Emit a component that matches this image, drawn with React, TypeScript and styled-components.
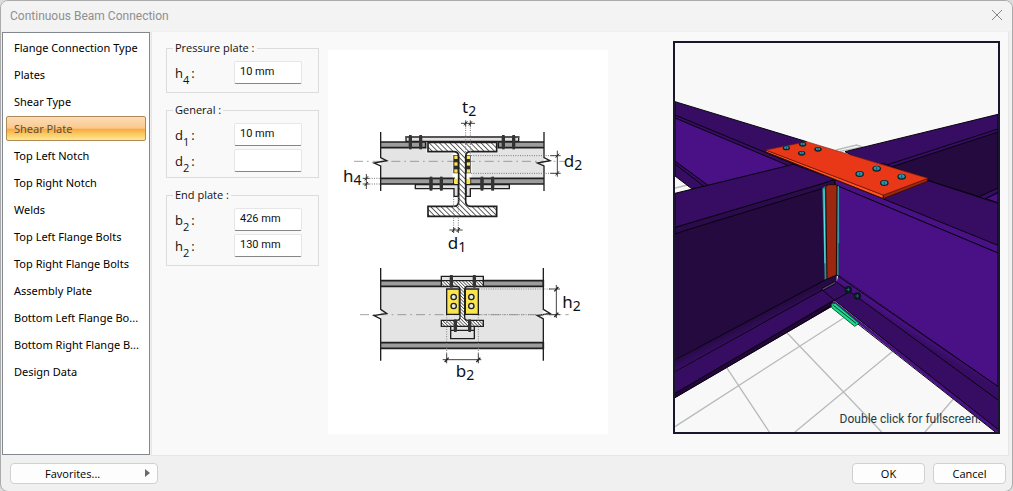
import React from 'react';
import styled, { createGlobalStyle } from 'styled-components';

const GlobalStyle = createGlobalStyle`
  *, *::before, *::after { box-sizing: border-box; }
  body {
    margin: 0;
    background: #dcdcdc;
    color: #111;
    font-family: 'Open Sans', 'Noto Sans', sans-serif;
    font-size: 11px;
  }
  button, input { font: inherit; color: inherit; }
`;

const Dialog = styled.main`
  display: flex;
  flex-direction: column;
  min-height: 100vh;
  border: 1px solid #ababab;
  border-radius: 8px;
  background: #f0f0f0;
  overflow: hidden;
`;

const TitleBar = styled.header`
  display: flex;
  align-items: center;
  justify-content: space-between;
  height: 30px;
  padding: 0 9px;
  background: #f3f3f3;
`;

const Title = styled.h1`
  margin: 0;
  font-family: Roboto, sans-serif;
  font-size: 12px;
  font-weight: 400;
  color: #8f8f8f;
`;

const CloseButton = styled.button`
  display: flex;
  padding: 0 0 2px;
  border: 0;
  background: none;
  color: #858585;
`;

const Body = styled.div`
  display: flex;
  flex: 1;
  gap: 1px;
  padding: 0 3px 0 1px;
`;

const Nav = styled.nav`
  flex: none;
  width: 148px;
  margin: 1px 0;
  padding: 2px 3px;
  border: 1px solid #828790;
  background: #fff;
  font-family: 'Noto Sans', sans-serif;
`;

const NavList = styled.ul`
  display: flex;
  flex-direction: column;
  gap: 2px;
  margin: 0;
  padding: 0;
  list-style: none;
`;

const NavItem = styled.button<{ $active?: boolean }>`
  display: block;
  width: 100%;
  height: 25px;
  padding: 0 7px;
  border: 1px solid ${p => (p.$active ? '#b08a55' : 'transparent')};
  border-radius: 2px;
  background: ${p =>
    p.$active
      ? 'linear-gradient(#fbdcb8 0%, #fbc98f 48%, #f8ab42 54%, #fbcb62 75%, #fde79a 100%)'
      : 'none'};
  color: ${p => (p.$active ? '#5c5040' : '#000')};
  text-align: left;
  white-space: nowrap;
`;

const Content = styled.section`
  display: flex;
  flex: 1;
  align-items: flex-start;
  padding: 9px 8px 21px 14px;
  border: 1px solid #e6e6e6;
  border-top-color: #efefef;
  background: #f9f9f9;
`;

const Fields = styled.form`
  display: flex;
  flex-direction: column;
  gap: 10px;
  width: 153px;
`;

const Group = styled.fieldset<{ $bottom: number }>`
  min-width: 0;
  margin: 0;
  padding: 6px 16px ${p => p.$bottom}px 8px;
  border: 1px solid #dcdcdc;

  & > div + div { margin-top: 3px; }
`;

const Legend = styled.legend`
  margin-left: -2px;
  padding: 0 2px;
  line-height: 14px;
`;

const Row = styled.div`
  display: flex;
  align-items: center;
  justify-content: space-between;
`;

const Label = styled.label`
  display: flex;
  font-size: 13px;
  line-height: 18px;

  sub {
    align-self: flex-end;
    margin: 0 2px -5px 0;
    font-size: 11px;
    line-height: 14px;
    vertical-align: baseline;
  }
`;

const Field = styled.input`
  width: 68px;
  height: 23px;
  padding: 0 5px 2px;
  border: 1px solid #e6e6e6;
  border-bottom-color: #868686;
  border-radius: 2px;
  outline: 0;
  background: #fff;
  font-family: Roboto, sans-serif;
`;

const Diagram = styled.figure`
  margin: 9px 10px 0 9px;
  background: #fff;

  svg { display: block; }
`;

const Preview = styled.figure`
  position: relative;
  margin: 0 0 0 auto;
  border: 2px solid #17182e;
  background: #f8f8f8;

  svg { display: block; }
`;

const Hint = styled.figcaption`
  position: absolute;
  right: 17px;
  bottom: 5px;
  color: #263a40;
  font-family: Roboto, sans-serif;
  font-size: 12px;
  line-height: 16px;
`;

const Footer = styled.footer`
  display: flex;
  align-items: center;
  gap: 8px;
  height: 35px;
  padding: 0 6px 1px 9px;
`;

const PushButton = styled.button<{ $wide?: boolean }>`
  display: flex;
  align-items: center;
  justify-content: ${p => (p.$wide ? 'space-between' : 'center')};
  width: ${p => (p.$wide ? 148 : 73)}px;
  height: 21px;
  padding: ${p => (p.$wide ? '0 6px 0 34px' : '0')};
  border: 1px solid #d0d0d0;
  border-radius: 4px;
  background: #fdfdfd;
  color: #000;
`;

const Spacer = styled.div`
  flex: 1;
`;

const sections = [
  'Flange Connection Type',
  'Plates',
  'Shear Type',
  'Shear Plate',
  'Top Left Notch',
  'Top Right Notch',
  'Welds',
  'Top Left Flange Bolts',
  'Top Right Flange Bolts',
  'Assembly Plate',
  'Bottom Left Flange Bo...',
  'Bottom Right Flange B...',
  'Design Data',
];

const groups = [
  { title: 'Pressure plate :', bottom: 8, fields: [['h', '4', '10 mm']] },
  { title: 'General :', bottom: 5, fields: [['d', '1', '10 mm'], ['d', '2', '']] },
  { title: 'End plate :', bottom: 8, fields: [['b', '2', '426 mm'], ['h', '2', '130 mm']] },
];

const INK = '#1f1f1f';

function Bolts({ xs, y1, y2 }: { xs: number[]; y1: number; y2: number }) {
  return (
    <g fill="#333">
      {xs.map(x => (
        <g key={x}>
          <rect x={x - 4} y={y1} width={8} height={y2 - y1} />
          <rect x={x - 5} y={y1 + 4} width={10} height={y2 - y1 - 8} />
        </g>
      ))}
    </g>
  );
}

function Symbol({ x, y, name, index }: { x: number; y: number; name: string; index: string }) {
  return (
    <text x={x} y={y} fontSize={51} fontFamily="'Noto Sans', sans-serif" fill="#111">
      {name}
      <tspan fontSize={42} dy={9}>{index}</tspan>
    </text>
  );
}

/* One drawing unit is a third of a screen pixel. */
function SectionDrawing() {
  return (
    <svg width="280" height="384" viewBox="-96 -120 840 1152" role="img" aria-label="Connection section">
      <defs>
        <pattern id="hatch" width="11" height="11" patternUnits="userSpaceOnUse" patternTransform="rotate(-45)">
          <rect width="11" height="11" fill="#fff" />
          <path d="M1 0V11" stroke="#444" strokeWidth="3" />
        </pattern>
        <pattern id="hatchFine" width="7" height="7" patternUnits="userSpaceOnUse" patternTransform="rotate(-45)">
          <rect width="7" height="7" fill="#fff" />
          <path d="M1 0V7" stroke="#555" strokeWidth="3" />
        </pattern>
      </defs>

      <g>
        <path d="M62 173H552V265H62Z" fill="#e4e4e4" />
        <path d="M199 155H414V190H335V265H331V284H282V265H278V190H199Z" fill="#fff" />
        <path d="M-18 214H616" stroke="#777" strokeWidth="2" strokeDasharray="27 12 5 12" />
        <g fill="#9c9c9c" stroke={INK} strokeWidth="5">
          <path d="M62 156H197V173H62M552 156H415V173H552" />
          <path d="M62 265H282V282H62M552 265H331V282H552" />
        </g>
        <path d="M138 141H476V154H138Z" fill="#e4e0e0" stroke={INK} strokeWidth="4" />
        <path d="M136 141H478" stroke="#555" strokeWidth="6" />
        <path
          d="M166 284H295V319H282V296H166ZM448 284H318V319H331V296H448Z"
          fill="#e0dede"
          stroke={INK}
          strokeWidth="4"
        />
        <Bolts xs={[151, 182, 430, 461]} y1={135} y2={178} />
        <Bolts xs={[213, 244, 366, 398]} y1={260} y2={302} />
        <path d="M280 195H296V250H280ZM317 195H332V250H317Z" fill="#2c2c2c" />
        <g fill="#fbe54e">
          {[197, 217, 238].map(y => (
            <g key={y}>
              <rect x="283" y={y} width="10" height="10" />
              <rect x="320" y={y} width="10" height="10" />
            </g>
          ))}
          <rect x="282" y="266" width="13" height="15" />
          <rect x="318" y="266" width="13" height="15" />
        </g>
        <path
          d="M204 157H410V185H332Q317 185 317 200V334Q317 349 332 349H410V379H204V349H281Q296 349 296 334V200Q296 185 281 185H204Z"
          fill="url(#hatch)"
          stroke={INK}
          strokeWidth="5"
        />
        <g fill="none" stroke={INK} strokeWidth="4">
          <path d="M62 126V203L80 212L42 219L62 228V303" />
          <path d="M552 126V203L570 212L532 219L552 228V303" />
        </g>
        <g fill="none" stroke="#777" strokeWidth="3" strokeDasharray="3 4">
          <path d="M317 106V195M331 106V195M333 197H590M333 250H590M28 265H62M28 282H62M281 320V412M295 320V412" />
        </g>
        <g fill="none" stroke="#444" strokeWidth="3">
          <path d="M303 100H345M592 182V260M19 252V297M268 420H308" />
          <path d="M317 91V110M331 91V110M571 197H602M571 250H602M8 265H28M8 282H28M281 411V429M295 411V429" />
        </g>
        <g stroke={INK} strokeWidth="3">
          <path d="M312 106L322 94M326 106L336 94M587 203L597 191M587 256L597 244M14 271L24 259M14 288L24 276M276 426L286 414M290 426L300 414" />
        </g>
        <Symbol x={306} y={68} name="t" index="2" />
        <Symbol x={611} y={232} name="d" index="2" />
        <Symbol x={-51} y={276} name="h" index="4" />
        <Symbol x={263} y={477} name="d" index="1" />
      </g>

      <g transform="translate(0 495)">
        <path d="M62 94H550V262H62Z" fill="#e4e4e4" />
        <path d="M0 179H626" stroke="#777" strokeWidth="2" strokeDasharray="27 12 5 12" />
        <g fill="#9c9c9c" stroke={INK} strokeWidth="5">
          <path d="M62 77H550V94H62M62 263H550V280H62" />
        </g>
        <path d="M244 64H370V77H244Z" fill="#e4e4e4" stroke={INK} strokeWidth="4" />
        <path d="M272 214H343V251H272ZM272 226H343" fill="#e4e4e4" stroke={INK} strokeWidth="4" />
        <path
          d="M244 77H370V94H324Q314 94 314 104V186Q314 196 324 196H370V214H244V196H290Q300 196 300 186V104Q300 94 290 94H244Z"
          fill="url(#hatchFine)"
          stroke={INK}
          strokeWidth="4"
        />
        <g fill="#fbe54e" stroke={INK} strokeWidth="4">
          <path d="M260 102H298V178H260ZM316 102H355V178H316Z" />
        </g>
        <g fill="#e9e9e0" stroke={INK} strokeWidth="4">
          {[126, 153].map(y => (
            <g key={y}>
              <circle cx="281" cy={y} r="8" />
              <circle cx="334" cy={y} r="8" />
            </g>
          ))}
        </g>
        <Bolts xs={[274, 343]} y1={60} y2={98} />
        <Bolts xs={[286, 329]} y1={193} y2={231} />
        <g fill="none" stroke={INK} strokeWidth="4">
          <path d="M62 39V163L80 175L42 182L62 192V317" />
          <path d="M550 39V163L570 175L532 182L550 192V317" />
        </g>
        <g fill="none" stroke="#888" strokeWidth="3" strokeDasharray="3 4">
          <path d="M357 102H570M357 179H570M260 180V296M355 180V296" />
        </g>
        <g fill="none" stroke="#444" strokeWidth="3">
          <path d="M589 90V189M567 102H600M567 179H600M248 314H364M260 295V325M355 295V325" />
        </g>
        <g stroke={INK} strokeWidth="4">
          <path d="M583 109L595 96M583 186L595 173M254 321L266 308M349 321L361 308" />
        </g>
        <Symbol x={607} y={158} name="h" index="2" />
        <Symbol x={287} y={366} name="b" index="2" />
      </g>
    </svg>
  );
}

const plateBolts = [[379, 354], [428, 343], [474, 358], [425, 370], [650, 416], [599, 432], [725, 440], [673, 459]];

function ModelView() {
  return (
    <svg width="323" height="389" viewBox="45 39 969 1167" role="img" aria-label="3D model">
      <defs>
        <linearGradient id="rootLeft" gradientUnits="userSpaceOnUse" x1="270" y1="872" x2="284" y2="900">
          <stop offset="0" stopColor="#260a42" />
          <stop offset="1" stopColor="#370d63" />
        </linearGradient>
        <linearGradient id="rootRight" gradientUnits="userSpaceOnUse" x1="780" y1="905" x2="766" y2="928">
          <stop offset="0" stopColor="#4a1086" />
          <stop offset="1" stopColor="#370d63" />
        </linearGradient>
      </defs>

      <g stroke="#b9bbbb" strokeWidth="4" fill="none">
        <path d="M45 1190L560 858M200 1013L328 1206M378 905L665 1206M405 1206L700 962M795 1206L880 1107" />
        <path d="M45 474L95 462M528 360L590 345L612 352M540 364L600 352" />
      </g>

      <g stroke="#08030f" strokeWidth="3">
        <path d="M555 365L1014 253V520L805 452L640 410Z" fill="#370d63" />
        <path d="M690 412L1014 306V474L958 500L805 452Z" fill="#240a3e" />
        <path d="M680 405L1014 297M975 507L1014 487" fill="none" />
        <path d="M978 506L1014 488V518Z" fill="#4a1086" />

        <path d="M45 215L440 335L525 460L400 420L45 264Z" fill="#370d63" />
        <path d="M45 393L150 468L95 476L45 438Z" fill="#370d63" />
        <path d="M45 264L400 413L145 467L45 393Z" fill="#4a1086" />
        <path d="M45 255L410 406M45 402L133 470" fill="none" />

        <path d="M45 600L490 474L500 752L45 990Z" fill="#240a3e" stroke="none" />
        <path d="M45 592L525 448V464L80 600L45 612Z" fill="#2b0b4b" />
        <path d="M45 490L400 403L525 448L490 460L45 592Z" fill="#370d63" />

        <path d="M525 448L670 400L805 452L1014 520V845L900 800Z" fill="#370d63" />
        <path d="M525 448L1014 646V669L540 471L525 462Z" fill="#4a1086" />
        <path d="M536 469L1014 669V1070L535 735Z" fill="#4a1086" />
      </g>

      <path d="M487 475L497 468H536V735L502 751H494Z" fill="#2c8c92" />
      <path d="M492 478L495 700" stroke="#5ee6e6" strokeWidth="3" />
      <path d="M536 470V640" stroke="#46c8d0" strokeWidth="2" />
      <path d="M497 470L505 464H525L531 468L529 738L501 750Z" fill="#9b2711" stroke="#200808" strokeWidth="3" />

      <path d="M45 990L495 750L530 735L530 755L45 1025Z" fill="url(#rootLeft)" />
      <path d="M45 1025L530 752L570 780L520 812L45 1103Z" fill="#370d63" />
      <path d="M45 1090L522 808L515 830L45 1104Z" fill="#22083a" />
      <path d="M535 735L1014 1070V1112L530 757Z" fill="url(#rootRight)" />
      <path d="M485 778L530 756L1014 1110V1206L525 812Z" fill="#370d63" />
      <path d="M522 812L1014 1198V1206H1006L518 820Z" fill="#4a1086" />
      <g fill="none" stroke="#08030f" strokeWidth="3">
        <path d="M45 990L495 750L530 735L1014 1070M45 1025L530 756L1014 1110" />
        <path d="M45 1090L570 784M45 1103L515 829M485 778L525 812L1014 1198M520 824L1006 1206M480 846L518 822" />
      </g>
      <path d="M488 778L526 757" stroke="#08030f" strokeWidth="9" />
      <path d="M488 778L526 757" stroke="#54486c" strokeWidth="4" />
      <path d="M515 822L526 820L597 880L584 889L515 833Z" fill="#1fd890" stroke="#063" strokeWidth="3" />
      <path d="M520 826L588 880" stroke="#063c28" strokeWidth="3" />

      {[[565, 779], [592, 798]].map(([x, y]) => (
        <g key={x}>
          <circle cx={x} cy={y} r="11" fill="#06181c" />
          <path d={`M${x - 6} ${y}H${x + 5}M${x} ${y - 6}V${y + 5}`} stroke="#297c86" strokeWidth="2" />
        </g>
      ))}

      <g strokeLinejoin="round">
        <path d="M318 360L670 495V506L318 366Z" fill="#ff5420" stroke="#3a0c05" strokeWidth="3" />
        <path d="M670 495L803 445V454L670 506Z" fill="#9b2711" stroke="#3a0c05" strokeWidth="3" />
        <path d="M318 360L440 335L803 445L670 495Z" fill="#e83818" stroke="#7a1c0c" strokeWidth="2" />
      </g>
      {plateBolts.map(([x, y], i) => {
        const r = i < 4 ? 10 : 12;
        return (
          <g key={x}>
            <ellipse cx={x} cy={y} rx={r + 1} ry={r - 3} fill="#08242c" />
            <ellipse cx={x} cy={y - 1} rx={r - 3} ry={r - 6} fill="#2c93ad" />
            <path d={`M${x} ${y - 4}V${y + 4}`} stroke="#0b3a48" strokeWidth="2" />
          </g>
        );
      })}
    </svg>
  );
}

export default function App() {
  return (
    <>
      <GlobalStyle />
      <Dialog>
        <TitleBar>
          <Title>Continuous Beam Connection</Title>
          <CloseButton aria-label="Close">
            <svg width="12" height="12" viewBox="0 0 12 12" fill="none" stroke="currentColor">
              <path d="M1 1L11 11M11 1L1 11" />
            </svg>
          </CloseButton>
        </TitleBar>

        <Body>
          <Nav>
            <NavList>
              {sections.map(name => (
                <li key={name}>
                  <NavItem $active={name === 'Shear Plate'}>{name}</NavItem>
                </li>
              ))}
            </NavList>
          </Nav>

          <Content>
            <Fields>
              {groups.map(group => (
                <Group key={group.title} $bottom={group.bottom}>
                  <Legend>{group.title}</Legend>
                  {group.fields.map(([letter, index, value]) => (
                    <Row key={letter + index}>
                      <Label htmlFor={letter + index}>
                        {letter}
                        <sub>{index}</sub>:
                      </Label>
                      <Field id={letter + index} defaultValue={value} />
                    </Row>
                  ))}
                </Group>
              ))}
            </Fields>
            <Diagram>
              <SectionDrawing />
            </Diagram>
            <Preview>
              <ModelView />
              <Hint>Double click for fullscreen.</Hint>
            </Preview>
          </Content>
        </Body>

        <Footer>
          <PushButton $wide>
            Favorites...
            <svg width="6" height="8" viewBox="0 0 6 8" fill="#6a6a6a">
              <path d="M0 0L5 4L0 8Z" />
            </svg>
          </PushButton>
          <Spacer />
          <PushButton>OK</PushButton>
          <PushButton>Cancel</PushButton>
        </Footer>
      </Dialog>
    </>
  );
}
